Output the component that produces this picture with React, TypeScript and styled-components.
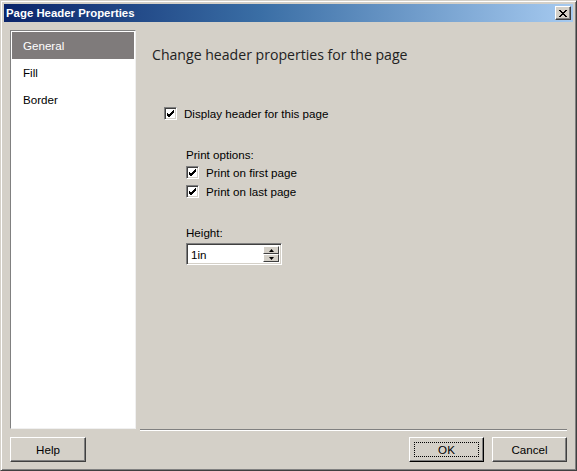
import React from "react";
import styled, { createGlobalStyle } from "styled-components";

const Global = createGlobalStyle`
  html, body { margin: 0; padding: 0; background: #d4d0c8; }
  body { font-family: "Liberation Sans", Arial, sans-serif; font-size: 11.6px; color: #000; }
`;

const Window = styled.div`
  box-sizing: border-box;
  width: 577px;
  height: 471px;
  background: #d4d0c8;
  border-top: 1px solid #d4d0c8;
  border-left: 1px solid #d4d0c8;
  border-right: 1px solid #404040;
  border-bottom: 1px solid #404040;
  box-shadow: inset 1px 1px 0 #fff, inset -1px -1px 0 #808080;
  padding: 3px;
  display: flex;
  flex-direction: column;
`;

const TitleBar = styled.div`
  box-sizing: border-box;
  height: 18px;
  flex: none;
  display: flex;
  align-items: center;
  justify-content: space-between;
  padding: 0 2px 0 2px;
  background: linear-gradient(to right, #0a246a 0%, #3a6ea5 45%, #a6caf0 100%);
`;

const Title = styled.span`
  color: #fff;
  font-weight: bold;
  font-size: 11.4px;
`;

const CloseButton = styled.div`
  box-sizing: border-box;
  width: 16px;
  height: 14px;
  background: #d4d0c8;
  border-top: 1px solid #fff;
  border-left: 1px solid #fff;
  border-right: 1px solid #404040;
  border-bottom: 1px solid #404040;
  box-shadow: inset -1px -1px 0 #808080;
  display: flex;
  align-items: center;
  justify-content: center;
`;

const Body = styled.div`
  flex: 1;
  display: flex;
  flex-direction: column;
  padding: 8px 6px 0 6px;
`;

const Main = styled.div`
  flex: none;
  display: flex;
`;

const Sidebar = styled.div`
  box-sizing: border-box;
  width: 126px;
  height: 399px;
  background: #fff;
  border-top: 1px solid #808080;
  border-left: 1px solid #808080;
  border-right: 1px solid #f0f0f0;
  border-bottom: 1px solid #f0f0f0;
  padding: 1px 1px 0 1px;
  display: flex;
  flex-direction: column;
`;

const NavItem = styled.div<{ $selected?: boolean }>`
  height: 27px;
  display: flex;
  align-items: center;
  padding-left: 11px;
  background: ${(p) => (p.$selected ? "#7f7b7b" : "transparent")};
  color: ${(p) => (p.$selected ? "#fff" : "#000")};
`;

const Content = styled.div`
  flex: 1;
  display: flex;
  flex-direction: column;
  padding: 14px 0 0 16px;
`;

const Heading = styled.h1`
  margin: 0;
  font-family: "Open Sans", "Liberation Sans", sans-serif;
  font-weight: normal;
  font-size: 14.1px;
  color: #222;
  line-height: 22px;
`;

const CheckRow = styled.label`
  display: flex;
  align-items: center;
  gap: 7px;
  height: 19px;
`;

const Box = styled.span`
  box-sizing: border-box;
  width: 13px;
  height: 13px;
  background: #fff;
  border-top: 1px solid #808080;
  border-left: 1px solid #808080;
  border-right: 1px solid #fff;
  border-bottom: 1px solid #fff;
  box-shadow: inset 1px 1px 0 #404040, inset -1px -1px 0 #d4d0c8;
  display: flex;
  align-items: center;
  justify-content: center;
`;

const Group = styled.div<{ $indent: number; $top: number }>`
  display: flex;
  flex-direction: column;
  margin-left: ${(p) => p.$indent}px;
  margin-top: ${(p) => p.$top}px;
`;

const Label = styled.div`
  height: 16px;
  line-height: 16px;
`;

const SpinBox = styled.div`
  box-sizing: border-box;
  width: 96px;
  height: 22px;
  margin-top: 2px;
  background: #fff;
  border-top: 1px solid #808080;
  border-left: 1px solid #808080;
  border-right: 1px solid #fff;
  border-bottom: 1px solid #fff;
  box-shadow: inset 1px 1px 0 #404040, inset -1px -1px 0 #d4d0c8;
  display: flex;
  padding: 2px;
`;

const SpinText = styled.div`
  flex: 1;
  display: flex;
  align-items: center;
  padding-left: 2px;
`;

const SpinButtons = styled.div`
  width: 16px;
  display: flex;
  flex-direction: column;
`;

const SpinButton = styled.div`
  box-sizing: border-box;
  flex: 1;
  background: #d4d0c8;
  border-top: 1px solid #fff;
  border-left: 1px solid #fff;
  border-right: 1px solid #404040;
  border-bottom: 1px solid #404040;
  display: flex;
  align-items: center;
  justify-content: center;
`;

const Separator = styled.div`
  flex: none;
  margin-left: 130px;
  height: 0;
  border-top: 1px solid #808080;
  border-bottom: 1px solid #fff;
`;

const Footer = styled.div`
  display: flex;
  align-items: flex-start;
  padding-top: 6px;
  gap: 8px;
`;

const Spacer = styled.div`
  flex: 1;
`;

const Button = styled.button<{ $width: number; $default?: boolean }>`
  box-sizing: border-box;
  width: ${(p) => p.$width}px;
  height: 25px;
  font-family: "Liberation Sans", Arial, sans-serif;
  font-size: 11.6px;
  color: #000;
  background: #d4d0c8;
  border-top: 1px solid #fff;
  border-left: 1px solid #fff;
  border-right: 1px solid ${(p) => (p.$default ? "#000" : "#404040")};
  border-bottom: 1px solid ${(p) => (p.$default ? "#000" : "#404040")};
  box-shadow: inset -1px -1px 0 #808080;
  padding: 0;
  display: flex;
  align-items: center;
  justify-content: center;
`;

const Focus = styled.span`
  box-sizing: border-box;
  width: calc(100% - 8px);
  height: calc(100% - 8px);
  border: 1px dotted #000;
  display: flex;
  align-items: center;
  justify-content: center;
`;

const Check = () => (
  <svg width="9" height="9" viewBox="0 0 9 9">
    <path d="M1 4 L3 6 L8 1 M1 5 L3 7 L8 2 M1 6 L3 8 L8 3" stroke="#000" strokeWidth="1" fill="none" shapeRendering="crispEdges" />
  </svg>
);

const Arrow = ({ up }: { up?: boolean }) => (
  <svg width="5" height="3" viewBox="0 0 5 3">
    <path d={up ? "M2.5 0 L5 3 L0 3 Z" : "M0 0 L5 0 L2.5 3 Z"} fill="#000" />
  </svg>
);

const CheckBox: React.FC<{ children: React.ReactNode }> = ({ children }) => (
  <CheckRow>
    <Box>
      <Check />
    </Box>
    <span>{children}</span>
  </CheckRow>
);

export default function App() {
  return (
    <>
      <Global />
      <Window>
        <TitleBar>
          <Title>Page Header Properties</Title>
          <CloseButton>
            <svg width="8" height="7" viewBox="0 0 8 7">
              <path d="M0 0 L7 7 M1 0 L8 7 M7 0 L0 7 M8 0 L1 7" stroke="#000" strokeWidth="1" shapeRendering="crispEdges" />
            </svg>
          </CloseButton>
        </TitleBar>
        <Body>
          <Main>
            <Sidebar>
              <NavItem $selected>General</NavItem>
              <NavItem>Fill</NavItem>
              <NavItem>Border</NavItem>
            </Sidebar>
            <Content>
              <Heading>Change header properties for the page</Heading>
              <Group $indent={12} $top={38}>
                <CheckBox>Display header for this page</CheckBox>
              </Group>
              <Group $indent={34} $top={24}>
                <Label>Print options:</Label>
                <CheckBox>Print on first page</CheckBox>
                <CheckBox>Print on last page</CheckBox>
              </Group>
              <Group $indent={34} $top={24}>
                <Label>Height:</Label>
                <SpinBox>
                  <SpinText>1in</SpinText>
                  <SpinButtons>
                    <SpinButton><Arrow up /></SpinButton>
                    <SpinButton><Arrow /></SpinButton>
                  </SpinButtons>
                </SpinBox>
              </Group>
            </Content>
          </Main>
          <Separator />
          <Footer>
            <Button $width={76}>Help</Button>
            <Spacer />
            <Button $width={75} $default>
              <Focus>OK</Focus>
            </Button>
            <Button $width={75}>Cancel</Button>
          </Footer>
        </Body>
      </Window>
    </>
  );
}
